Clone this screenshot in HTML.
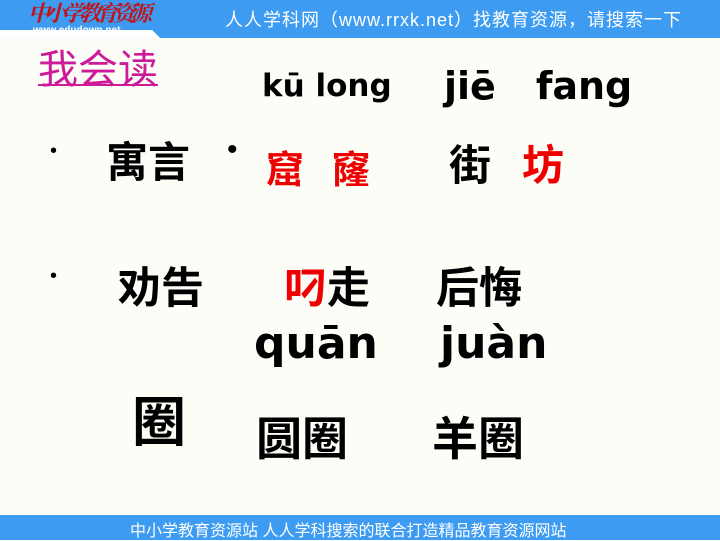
<html><head><style>
body{margin:0;width:720px;height:540px;background:#fdfdf8;position:relative;overflow:hidden;font-family:"Liberation Sans","Noto Sans CJK SC",sans-serif}
.a{position:absolute;white-space:nowrap}
.cn{font-family:"Noto Sans CJK SC","WenQuanYi Zen Hei",sans-serif;font-weight:bold;line-height:1}
.py{font-family:"DejaVu Sans","Liberation Sans",sans-serif;font-weight:bold}
</style></head><body>
<svg class="a" style="left:0;top:0" width="720" height="40"><polygon points="0,0 720,0 720,38 160,38 152,30 0,30" fill="#3d9cf2"/><polygon points="0,30 152,30 160,38 0,38" fill="#fff"/></svg>
<div class="a" style="left:28px;top:1px;font:italic bold 22px 'Noto Serif CJK SC',serif;color:#c0141a;letter-spacing:-5px;line-height:1.1">中小学教育资源</div>
<div class="a" style="left:33px;top:26px;font-size:10px;color:#fff;font-weight:bold;line-height:1">www.edudown.net</div>
<div class="a" style="left:225px;top:6px;font-size:18px;color:#fff;letter-spacing:1px">人人学科网（www.rrxk.net）找教育资源，请搜索一下</div>
<div class="a" style="left:38px;top:44px;font-size:40px;color:#cc1a9a;text-decoration:underline;text-decoration-thickness:2px;font-family:'Noto Sans CJK SC',sans-serif;line-height:1.1">我会读</div>
<div class="a py" style="left:262px;top:68px;font-size:31px">kū long</div>
<div class="a py" style="left:444px;top:64px;font-size:38px">jiē<span style="display:inline-block;width:40px"></span>fang</div>
<div class="a" style="left:50px;top:140px;font-size:20px">•</div>
<div class="a cn" style="left:106px;top:139px;font-size:42px">寓言</div>
<div class="a" style="left:227px;top:133px;font-size:30px">•</div>
<div class="a cn" style="left:266px;top:148px;font-size:38px;color:#e00;letter-spacing:28px">窟窿</div>
<div class="a cn" style="left:449px;top:142px;font-size:42px">街</div>
<div class="a cn" style="left:522px;top:142px;font-size:42px;color:#e00">坊</div>
<div class="a" style="left:50px;top:265px;font-size:20px">•</div>
<div class="a cn" style="left:118px;top:264px;font-size:43px">劝告</div>
<div class="a cn" style="left:284px;top:264px;font-size:43px"><span style="color:#e00">叼</span>走</div>
<div class="a cn" style="left:436px;top:264px;font-size:43px">后悔</div>
<div class="a py" style="left:254px;top:318px;font-size:44px">quān</div>
<div class="a py" style="left:440px;top:318px;font-size:44px">juàn</div>
<div class="a cn" style="left:132px;top:391px;font-size:54px">圈</div>
<div class="a cn" style="left:256px;top:413px;font-size:46px">圆圈</div>
<div class="a cn" style="left:432px;top:413px;font-size:46px">羊圈</div>
<div class="a" style="left:0;top:515px;width:720px;height:25px;background:#3d9cf2"></div>
<div class="a" style="left:130px;top:517px;font-size:16px;color:#fff">中小学教育资源站 人人学科搜索的联合打造精品教育资源网站</div>
</body></html>
